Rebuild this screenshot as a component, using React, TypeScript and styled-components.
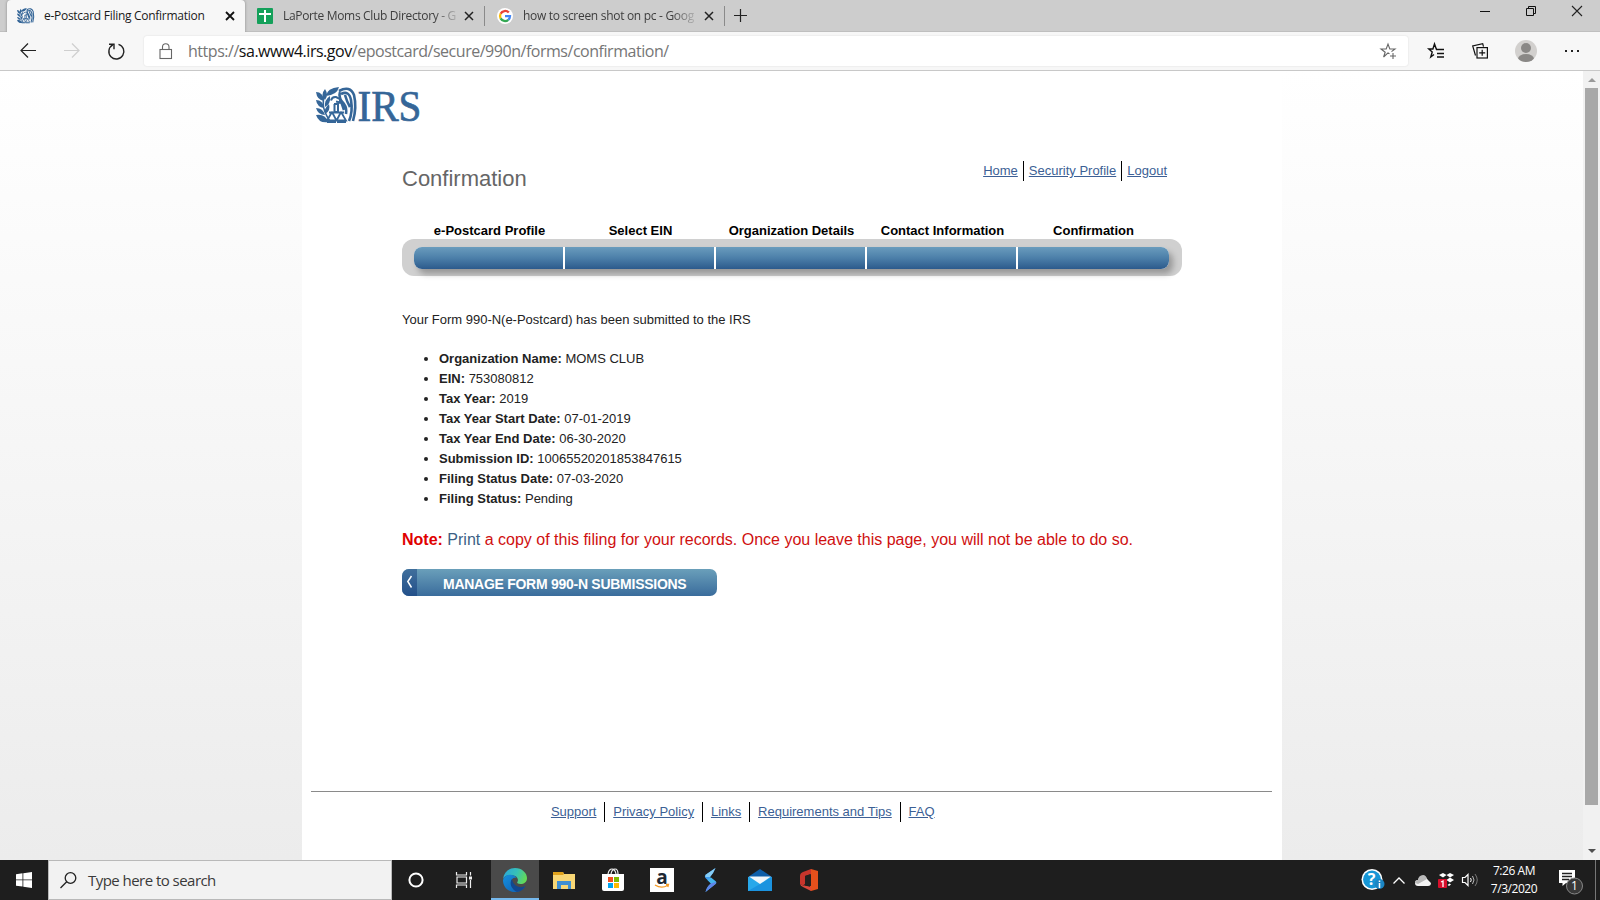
import React from "react";
import styled, { createGlobalStyle } from "styled-components";

const Global = createGlobalStyle`
  * { box-sizing: border-box; }
  html, body { margin: 0; padding: 0; }
  body { width: 1600px; height: 900px; overflow: hidden; background: #fff; }
  svg { display: block; flex: none; overflow: visible; }
`;

const ui = `"Open Sans", "Noto Sans", sans-serif`;
const arial = `"Liberation Sans", Arial, sans-serif`;

const Screen = styled.div`
  width: 1600px;
  height: 900px;
  display: flex;
  flex-direction: column;
  font-family: ${ui};
`;

/* ---------- browser chrome ---------- */
const TabStrip = styled.div`
  height: 32px;
  flex: none;
  display: flex;
  background: #cdcdcd;
  border-bottom: 1px solid #bfbfbf;
  padding-left: 7px;
`;

const Tab = styled.div<{ $active?: boolean }>`
  width: ${(p) => (p.$active ? 238 : 239)}px;
  height: ${(p) => (p.$active ? 32 : 31)}px;
  padding: 0 11px 0 ${(p) => (p.$active ? 10 : 12)}px;
  display: flex;
  align-items: center;
  background: ${(p) => (p.$active ? "#f7f7f7" : "transparent")};
  box-shadow: ${(p) => (p.$active ? "0 0 3px rgba(0,0,0,.35)" : "none")};
  border-radius: 4px 4px 0 0;
  clip-path: ${(p) => (p.$active ? "inset(0 -4px 0 -4px)" : "none")};
`;

const TabTitle = styled.div<{ $active?: boolean; $space: number; $gap: number }>`
  margin-left: ${(p) => p.$gap}px;
  margin-right: auto;
  white-space: nowrap;
  font-size: 12px;
  line-height: 18px;
  letter-spacing: ${(p) => p.$space}px;
  color: ${(p) => (p.$active ? "#1a1a1a" : "#3d3d3d")};
  ${(p) => !p.$active && "mask-image: linear-gradient(90deg, #000 calc(100% - 22px), rgba(0,0,0,.2) 100%);"}
`;

const TabDivider = styled.div`
  width: 1px;
  height: 20px;
  margin-top: 6px;
  background: #8a8a8a;
`;

const NewTab = styled.div`
  padding: 9px 0 0 9px;
`;

const WindowButtons = styled.div`
  margin-left: auto;
  display: flex;
  gap: 36px;
  padding: 6px 18px 0 0;
`;

const Toolbar = styled.div`
  height: 39px;
  flex: none;
  display: flex;
  align-items: center;
  background: #f7f7f7;
  border-bottom: 1px solid #c8c8c8;
`;

const NavButtons = styled.div`
  width: 144px;
  display: flex;
  align-items: center;
  gap: 28px;
  padding-left: 20px;
`;

const AddressBar = styled.div`
  width: 1264px;
  height: 30px;
  display: flex;
  align-items: center;
  background: #fff;
  border-radius: 3px;
  box-shadow: 0 0 2px rgba(0, 0, 0, 0.12);
  padding: 0 12px 0 15px;
`;

const Url = styled.div`
  margin: 0 auto 0 15px;
  font-size: 16px;
  line-height: 24px;
  letter-spacing: -0.47px;
  white-space: nowrap;
  color: #767676;
`;

const Host = styled.span`
  color: #111;
`;

const ToolbarActions = styled.div`
  flex: 1;
  display: flex;
  align-items: center;
  justify-content: space-between;
  padding: 0 21px 0 20px;
`;

/* ---------- page ---------- */
const Viewport = styled.div`
  height: 789px;
  flex: none;
  display: flex;
  background: linear-gradient(#fff, #ececec);
`;

const Scrollbar = styled.div`
  width: 17px;
  margin-left: auto;
  display: flex;
  flex-direction: column;
  align-items: center;
  background: #f1f1f1;
  padding: 7px 0;
`;

const Thumb = styled.div`
  width: 13px;
  height: 717px;
  margin: 6px 0 auto;
  background: #a8a8a8;
`;

const Page = styled.main`
  width: 980px;
  margin-left: 302px;
  background: #fff;
  padding: 16px 10px 0 9px;
  display: flex;
  flex-direction: column;
  font-family: ${arial};
  font-size: 13px;
  line-height: 20px;
  color: #222;
`;

const Content = styled.section`
  margin-left: 91px;
  width: 780px;
  height: 667px;
  display: flex;
  flex-direction: column;
  align-items: flex-start;
`;

const Header = styled.header`
  width: 765px;
  display: flex;
  justify-content: space-between;
  margin-top: 37px;
`;

const Title = styled.h1`
  margin: 3px 0 0;
  font-size: 22px;
  line-height: 30px;
  font-weight: 400;
  color: #666;
`;

const Links = styled.nav<{ $gap: number }>`
  display: flex;
  align-items: center;
  height: 20px;
  a {
    color: #3c5f95;
    text-decoration: underline;
    padding: 0 ${(p) => p.$gap}px;
  }
  a + a {
    border-left: 1px solid #000;
  }
  a:last-child {
    padding-right: 0;
  }
`;

const StepLabels = styled.div`
  display: flex;
  margin: 28px 0 0 13px;
`;

const StepLabel = styled.div`
  width: 151px;
  padding-right: 2px;
  text-align: center;
  font-weight: 700;
  line-height: 17px;
  color: #000;
  white-space: nowrap;
`;

const Track = styled.div`
  width: 780px;
  height: 37px;
  padding: 8px 13px 7px 12px;
  background: #d0d0d0;
  border-radius: 12px;
  display: flex;
`;

const Progress = styled.div`
  flex: 1;
  display: flex;
  gap: 2px;
  border-radius: 8px;
  background: #fff;
  overflow: hidden;
`;

const ProgressShadow = styled.div`
  display: flex;
  flex: 1;
  border-radius: 8px;
  box-shadow: 4px 5px 6px rgba(0, 0, 0, 0.28);
`;

const Segment = styled.div`
  width: 149px;
  background: linear-gradient(#6a9cbd, #4c7fa9 50%, #2c5a8c);
  &:last-child { flex: 1; }
`;

const Intro = styled.p`
  margin: 34px 0 0;
  letter-spacing: -0.01px;
`;

const Facts = styled.ul`
  margin: 19px 0 0;
  padding: 0 0 0 37px;
`;

const Note = styled.p`
  margin: 20px 0 0;
  font-size: 16px;
  line-height: 22px;
  color: #cf1010;
  white-space: nowrap;
  b { color: #e00000; }
  a { color: #3c5f85; }
`;

const ManageButton = styled.button`
  width: 315px;
  height: 27px;
  margin-top: 18px;
  padding: 0;
  border: 0;
  border-radius: 7px;
  overflow: hidden;
  display: flex;
  background: linear-gradient(#6a9fba, #3a6c9c);
  color: #fff;
  font: 700 14px/30px ${arial};
`;

const ButtonArrow = styled.span`
  width: 15px;
  height: 27px;
  display: flex;
  align-items: center;
  justify-content: center;
  padding-bottom: 2px;
  background: linear-gradient(#406f9c, #23508a);
`;

const ButtonText = styled.span`
  margin-left: 26px;
  letter-spacing: -0.27px;
  white-space: nowrap;
`;

const Footer = styled.footer`
  border-top: 1px solid #8a8a8a;
  padding: 10px 0 0 232px;
`;

/* ---------- taskbar ---------- */
const Taskbar = styled.div`
  height: 40px;
  flex: none;
  display: flex;
  background: #1e1e1e;
  color: #fff;
`;

const TaskButton = styled.div<{ $w?: number; $active?: boolean }>`
  width: ${(p) => p.$w ?? 49}px;
  height: 40px;
  display: flex;
  align-items: center;
  justify-content: center;
  background: ${(p) => (p.$active ? "#4a4a4a" : "transparent")};
  border-bottom: ${(p) => (p.$active ? "2px solid #76b9ed" : "0")};
  padding-top: ${(p) => (p.$active ? 2 : 0)}px;
  margin-left: ${(p) => (p.$active ? 3 : 0)}px;
`;

const Search = styled.div`
  width: 344px;
  height: 40px;
  display: flex;
  align-items: center;
  background: #f2f2f2;
  border: 1px solid #b9b9b9;
  padding-left: 11px;
  color: #3a3a3a;
  font-size: 15px;
  letter-spacing: -0.54px;
`;

const SearchHint = styled.span`
  margin: 0 0 1px 11px;
`;

const Tray = styled.div`
  margin-left: auto;
  display: flex;
  align-items: center;
`;

const Clock = styled.div`
  width: 62px;
  margin-left: 4px;
  text-align: center;
  font-size: 12px;
  line-height: 18px;
  letter-spacing: -0.45px;
  white-space: nowrap;
`;

const ShowDesktop = styled.div`
  width: 5px;
  height: 40px;
  border-left: 1px solid #777;
`;

/* ---------- drawings ---------- */
const Emblem = ({ w = 40, color = "#356698" }: { w?: number; color?: string }) => (
  <svg width={w} height={(w * 37) / 40} viewBox="0 0 40 37" fill="none" stroke={color}>
    <g fill={color} stroke="none">
      <path d="M0 5Q7 5 8 14Q1 13 0 5ZM9 13Q4 8 9 2Q13 8 9 13ZM10 9Q11 1 23 0Q21 8 10 9Z" />
      <path d="M0 13Q7 13 8 21Q1 20 0 13ZM9 20Q8 13 14 9Q15 17 9 20Z" />
      <path d="M0 21Q7 21 9 28Q2 28 0 21ZM9 27Q8 21 13 17Q15 24 9 27Z" />
      <path d="M0 28Q8 26 13 35Q3 37 0 28Z" />
    </g>
    <path d="M8 9Q6 18 9 25T15 35" strokeWidth="1.6" />
    <path d="M15 13.500q1-4 5-3.500l4 2v3.500l-4-1M18 17h4v8h-3.500V17M13 25.500h15" strokeWidth="2" />
    <path d="M16 25l-5 8.500h9.500L16 25M25 25l-4.500 8.500H30L25 25M11 35h9M21 35h9" strokeWidth="1.800" />
    <path d="M23 4Q34-2 38 8Q41 20 37 34M25 7Q33 3 35 13Q37 25 33 34M24 5Q22 11 28 17Q31 21 30 27M29 8Q31 15 34 20M24 11l4 12" strokeWidth="2.600" />
  </svg>
);

const IrsLogo = () => (
  <svg width="106" height="37" viewBox="0 0 106 37" style={{ marginLeft: 5 }}>
    <Emblem />
    <text x="41.500" y="33.500" fontFamily="Liberation Serif, serif" fontSize="45" textLength="64" lengthAdjust="spacingAndGlyphs" fill="#356698" stroke="#356698" strokeWidth=".7">
      IRS
    </text>
  </svg>
);

const CloseX = ({ s = 8, w = 1.5, c = "#222" }: { s?: number; w?: number; c?: string }) => (
  <svg width={s} height={s} viewBox={`0 0 ${s} ${s}`} stroke={c} strokeWidth={w}>
    <path d={`M0 0L${s} ${s}M${s} 0L0 ${s}`} />
  </svg>
);

const SheetsIcon = () => (
  <svg width="16" height="16" viewBox="0 0 16 16">
    <rect width="16" height="16" rx="1" fill="#14a05a" />
    <path d="M2 6h12M8 2v12" stroke="#fff" strokeWidth="2" />
  </svg>
);

const GoogleIcon = () => (
  <svg width="16" height="16" viewBox="0 0 16 16" fill="none" strokeWidth="2.3">
    <circle cx="8" cy="8" r="8" fill="#fff" />
    <path d="M11.8 4.6A5 5 0 0 0 3.6 5.8" stroke="#ea4335" />
    <path d="M3.6 5.8a5 5 0 0 0 0 4.6" stroke="#fbbc05" />
    <path d="M3.6 10.4A5 5 0 0 0 11.3 11.8" stroke="#34a853" />
    <path d="M11.3 11.8A5 5 0 0 0 13 8.2H8" stroke="#4285f4" />
  </svg>
);

const NavIcons = () => (
  <NavButtons>
    <svg width="16" height="16" viewBox="0 0 16 16" fill="none" stroke="#222" strokeWidth="1.2">
      <path d="M16 7.500H1M8 .5L1 7.500l7 7" />
    </svg>
    <svg width="16" height="16" viewBox="0 0 16 16" fill="none" stroke="#cfcfcf" strokeWidth="1.2">
      <path d="M0 7.500h15M8 .5l7 7-7 7" />
    </svg>
    <svg width="17" height="17" viewBox="0 0 17 17" fill="none" stroke="#222" strokeWidth="1.4">
      <path d="M10.500 1.300A7.500 7.500 0 1 1 4.800 1.900M1 1.200h5v5" />
    </svg>
  </NavButtons>
);

const BrowserActions = () => (
  <ToolbarActions>
    <svg width="16" height="16" viewBox="0 0 16 16" fill="none" stroke="#111" strokeWidth="1.4">
      <path d="M9 6H8.300L6.500 1 4.900 6H.8l3.400 3-1.400 5L6 11.500M8 6.500h8M9 10.500h7M9 14h7" />
    </svg>
    <svg width="16" height="16" viewBox="0 0 16 16" fill="none" stroke="#111" strokeWidth="1.2">
      <path d="M3.500 12.500L.7 3l10-2.400.8 3" />
      <rect x="5" y="4.600" width="10.400" height="10.400" />
      <path d="M10.200 6.800v6M7.200 9.800h6" />
    </svg>
    <svg width="22" height="22" viewBox="0 0 22 22">
      <clipPath id="avatar"><circle cx="11" cy="11" r="11" /></clipPath>
      <g clipPath="url(#avatar)">
        <rect width="22" height="22" fill="#d2d0ce" />
        <circle cx="11" cy="8" r="5" fill="#8a8886" />
        <ellipse cx="11" cy="19" rx="8" ry="5" fill="#8a8886" />
      </g>
    </svg>
    <svg width="14" height="2" viewBox="0 0 14 2" fill="#222">
      <path d="M0 0h2v2H0zM6 0h2v2H6zM12 0h2v2h-2z" />
    </svg>
  </ToolbarActions>
);

const EdgeIcon = () => (
  <svg width="24" height="24" viewBox="0 0 24 24">
    <defs>
      <linearGradient id="e1" x1="0" x2="1" y1=".2" y2=".5">
        <stop offset="0" stopColor="#2aa7dc" /><stop offset=".55" stopColor="#37c1b7" /><stop offset="1" stopColor="#63d957" />
      </linearGradient>
      <linearGradient id="e2" x1="0" x2="1" y1="0" y2="1">
        <stop offset="0" stopColor="#1590df" /><stop offset="1" stopColor="#0f5cae" />
      </linearGradient>
    </defs>
    <path d="M0 11C1 4 6 0 12 0c7 0 12 5 12 10 0 4-3 6-6.500 6-3 0-4-1-3-2.300 1-1.500.5-4.700-3-6C7 6 2 7 0 11z" fill="url(#e1)" />
    <path d="M0 12C1 8 5 6 9 7c2 .4 4 1.500 4.500 3C9 9 7 13 9 17c2 4 8 5 13 1-2 4-6 6-10 6C5 24 0 19 0 12z" fill="url(#e2)" />
    <path d="M9 11c-3 4-1 10 5 13 4-.6 7-3 8.500-6C17 21 10 18 9 11z" fill="#12478f" />
  </svg>
);

const FolderIcon = () => (
  <svg width="22" height="19" viewBox="0 0 22 19">
    <path d="M0 1h10l1 2h11v15H0z" fill="#f8d775" />
    <path d="M0 1h10l1 2-1 1H0z" fill="#e0a21c" />
    <path d="M4 18v-8h14v8h-3v-4H8v4z" fill="#3f8fd2" />
  </svg>
);

const StoreIcon = () => (
  <svg width="24" height="24" viewBox="0 0 24 24">
    <path d="M7 6Q8 1 11 1T15 6M10 6Q11 1 14 1T17 6" fill="none" stroke="#eee" strokeWidth="1.200" />
    <path d="M1 6h22v15q0 2-2 2H3q-2 0-2-2z" fill="#fff" />
    <path d="M7 9h5v5H7z" fill="#f25022" /><path d="M13 9h5v5h-5z" fill="#7fba00" />
    <path d="M7 15h5v5H7z" fill="#00a4ef" /><path d="M13 15h5v5h-5z" fill="#ffb900" />
  </svg>
);

const AmazonIcon = () => (
  <svg width="24" height="24" viewBox="0 0 24 24">
    <path d="M0 0h24v24H0z" fill="#fff" />
    <text x="12" y="15.500" textAnchor="middle" fontFamily="Open Sans, sans-serif" fontWeight="700" fontSize="19" fill="#1c2733">a</text>
    <path d="M5 17q6.500 4 12.500.5M16 16.500h2.500l-.7 2.500" fill="none" stroke="#f59a23" strokeWidth="1.300" />
  </svg>
);

const BoltIcon = () => (
  <svg width="14" height="24" viewBox="0 0 14 24">
    <path d="M11.500 0L2 6.500Q0 8 1.500 10L7 15.500l3-2.500-4-4q3-3 5.500-9z" fill="#3f9cf0" />
    <path d="M11.500 0L2 6.500q-1 1-.5 2.500l4.500 0q3-3 5.500-9z" fill="#86cdf5" />
    <path d="M1.500 24Q3 18 7 15.500L3.500 12 7 9.500l5 4q1 1.500-.5 2.500z" fill="#43b4ec" />
    <path d="M1.500 24Q3 18 7 15.500l5-1.500q.5 1-.5 2z" fill="#5f83e8" />
  </svg>
);

const MailIcon = () => (
  <svg width="24" height="22" viewBox="0 0 24 22">
    <path d="M0 8L12 0l12 8v2H0z" fill="#0e5ea8" />
    <path d="M0 8h24v14H0z" fill="#28a8ea" />
    <path d="M0 22L24 8v14z" fill="#1b93df" />
    <path d="M1 7.500h22L12 15z" fill="#f1f6fa" />
  </svg>
);

const OfficeIcon = () => (
  <svg width="18" height="22" viewBox="0 0 18 22">
    <path d="M11 0l7 2v18l-7 2-1-2.500V3z" fill="#e5501c" />
    <path d="M11 0L3 3Q0 4 0 7v8l3 1.500 2-1.500V7l6-2z" fill="#c9352c" />
    <path d="M3 16.500L0 15q.5 2 3 3l8 4v-4l-6-1.500z" fill="#d9483c" />
    <path d="M5 7l6-2v12l-6-.500z" fill="#25201f" />
  </svg>
);

const tasks = [EdgeIcon, FolderIcon, StoreIcon, AmazonIcon, BoltIcon, MailIcon, OfficeIcon];

const steps = ["e-Postcard Profile", "Select EIN", "Organization Details", "Contact Information", "Confirmation"];

const facts: [string, string][] = [
  ["Organization Name:", "MOMS CLUB"],
  ["EIN:", "753080812"],
  ["Tax Year:", "2019"],
  ["Tax Year Start Date:", "07-01-2019"],
  ["Tax Year End Date:", "06-30-2020"],
  ["Submission ID:", "10065520201853847615"],
  ["Filing Status Date:", "07-03-2020"],
  ["Filing Status:", "Pending"],
];

export default function App() {
  return (
    <Screen>
      <Global />
      <TabStrip>
        <Tab $active>
          <Emblem w={17} />
          <TabTitle $active $space={-0.28} $gap={10}>e-Postcard Filing Confirmation</TabTitle>
          <CloseX w={1.8} c="#111" />
        </Tab>
        <Tab>
          <SheetsIcon />
          <TabTitle $space={-0.33} $gap={10}>LaPorte Moms Club Directory - G</TabTitle>
          <CloseX />
        </Tab>
        <TabDivider />
        <Tab>
          <GoogleIcon />
          <TabTitle $space={-0.3} $gap={10}>how to screen shot on pc - Goog</TabTitle>
          <CloseX />
        </Tab>
        <TabDivider />
        <NewTab>
          <svg width="13" height="13" viewBox="0 0 13 13" stroke="#222" strokeWidth="1.200">
            <path d="M0 6.500h13M6.500 0v13" />
          </svg>
        </NewTab>
        <WindowButtons>
          <svg width="10" height="10" viewBox="0 0 10 10" stroke="#111"><path d="M0 5.500h10" /></svg>
          <svg width="10" height="10" viewBox="0 0 10 10" fill="none" stroke="#111">
            <path d="M.5 2.500h7v7h-7zM2.500 2.500v-2h7v7h-2" />
          </svg>
          <CloseX s={10} w={1.1} />
        </WindowButtons>
      </TabStrip>

      <Toolbar>
        <NavIcons />
        <AddressBar>
          <svg width="14" height="16" viewBox="0 0 14 16" fill="none" stroke="#666" strokeWidth="1.100">
            <rect x="1" y="6.500" width="11.500" height="9" />
            <path d="M3.500 6.500V4a3.200 3.200 0 0 1 6.500 0v2.500" />
          </svg>
          <Url>https://<Host>sa.www4.irs.gov</Host>/epostcard/secure/990n/forms/confirmation/</Url>
          <svg width="16" height="16" viewBox="0 0 16 16" fill="none" stroke="#666" strokeWidth="1.100">
            <path d="M9.500 10.800L8 9.900 3.600 14l1.600-4.800L1 6h5.200L8 1l1.800 5H15l-3.500 2.600M13 10v6M10 13h6" />
          </svg>
        </AddressBar>
        <BrowserActions />
      </Toolbar>

      <Viewport>
        <Page>
          <IrsLogo />
          <Content>
            <Header>
              <Title>Confirmation</Title>
              <Links $gap={5}>
                {["Home", "Security Profile", "Logout"].map((t) => <a key={t}>{t}</a>)}
              </Links>
            </Header>
            <StepLabels>
              {steps.map((s) => <StepLabel key={s}>{s}</StepLabel>)}
            </StepLabels>
            <Track>
              <ProgressShadow>
                <Progress>{steps.map((s) => <Segment key={s} />)}</Progress>
              </ProgressShadow>
            </Track>
            <Intro>Your Form 990-N(e-Postcard) has been submitted to the IRS</Intro>
            <Facts>
              {facts.map(([k, v]) => <li key={k}><b>{k}</b> {v}</li>)}
            </Facts>
            <Note>
              <b>Note:</b> <a>Print</a> a copy of this filing for your records. Once you leave this page, you will not be able to do so.
            </Note>
            <ManageButton>
              <ButtonArrow>
                <svg width="5" height="12" viewBox="0 0 5 12" fill="none" stroke="#fff" strokeWidth="1.500">
                  <path d="M4.500 0L.8 5.500l3.700 6" />
                </svg>
              </ButtonArrow>
              <ButtonText>MANAGE FORM 990-N SUBMISSIONS</ButtonText>
            </ManageButton>
          </Content>
          <Footer>
            <Links $gap={7.9}>
              {["Support", "Privacy Policy", "Links", "Requirements and Tips", "FAQ"].map((t) => <a key={t}>{t}</a>)}
            </Links>
          </Footer>
        </Page>
        <Scrollbar>
          <svg width="8" height="4" viewBox="0 0 8 4"><path d="M0 4l4-4 4 4z" fill="#999" /></svg>
          <Thumb />
          <svg width="8" height="4" viewBox="0 0 8 4"><path d="M0 0h8L4 4z" fill="#505050" /></svg>
        </Scrollbar>
      </Viewport>

      <Taskbar>
        <TaskButton $w={48}>
          <svg width="16" height="16" viewBox="0 0 16 16" fill="#fff">
            <path d="M0 2.200l6.500-.9v6.200H0zM7.300 1.200L16 0v7.500H7.300zM0 8.300h6.500v6.300L0 13.700zM7.300 8.300H16V16l-8.700-1.200z" />
          </svg>
        </TaskButton>
        <Search>
          <svg width="17" height="17" viewBox="0 0 17 17" fill="none" stroke="#222" strokeWidth="1.300">
            <circle cx="10.500" cy="6" r="5.300" /><path d="M6.700 9.800L.5 16" />
          </svg>
          <SearchHint>Type here to search</SearchHint>
        </Search>
        <TaskButton $w={48}>
          <svg width="16" height="16" viewBox="0 0 16 16" fill="none" stroke="#fff" strokeWidth="2"><circle cx="8" cy="8" r="6.600" /></svg>
        </TaskButton>
        <TaskButton $w={48}>
          <svg width="16" height="16" viewBox="0 0 16 16" fill="none" stroke="#eee" strokeWidth="1.200">
            <path d="M.5 0v3h10V0M.5 16v-3h10v3M1 5h9.500v6H1zM14.500 0v3.500M14.500 8v8" /><path d="M13 4.500h3v3h-3z" fill="#eee" stroke="none" />
          </svg>
        </TaskButton>
        {tasks.map((Icon, i) => (
          <TaskButton key={i} $active={i === 0} $w={i === 0 ? 48 : 49}><Icon /></TaskButton>
        ))}
        <Tray>
          <svg width="24" height="22" viewBox="0 0 24 22">
            <circle cx="11" cy="10.500" r="10.500" fill="#fff" /><circle cx="11" cy="10.500" r="9" fill="#1696d6" />
            <text x="10.500" y="16" textAnchor="middle" fontFamily="Open Sans, sans-serif" fontWeight="700" fontSize="16" fill="#fff">?</text>
            <circle cx="18.500" cy="15" r="5" fill="#1b86c4" /><path d="M18.500 14v5M18.500 11.500v1.500" stroke="#fff" strokeWidth="1.500" />
          </svg>
          <svg width="12" height="7" viewBox="0 0 12 7" fill="none" stroke="#fff" strokeWidth="1.300" style={{ marginLeft: 8 }}><path d="M.5 6.500L6 1l5.500 5.500" /></svg>
          <svg width="16" height="11" viewBox="0 0 16 11" style={{ marginLeft: 10 }}>
            <path d="M3 11a3 3 0 0 1 0-6 5 5 0 0 1 8-2.500L13 5l3 3q0 3-3 3z" fill="#f4f4f4" />
            <path d="M0 8a3 3 0 0 1 3-3A5 5 0 0 1 8-.1Q11 0 12 4L3 9z" fill="#b9b9b9" />
          </svg>
          <svg width="17" height="15" viewBox="0 0 17 15" style={{ marginLeft: 7 }}>
            <path d="M1 2l4-2 3.500 2L5 4.500zM8.500 2L12 0l4 2-4 2.500zM8.500 7L12 4.500 16 7l-4 2.500zM9.500 12l2-1.500 1.500 1-2 1.500z" fill="#fff" />
            <rect x="0" y="6" width="9" height="9" rx="1" fill="#d8102c" />
            <path d="M3 9l2-1v6" fill="none" stroke="#fff" strokeWidth="1.300" />
          </svg>
          <svg width="17" height="14" viewBox="0 0 17 14" fill="none" stroke="#fff" style={{ marginLeft: 7 }}>
            <path d="M.5 4.500h2.500L6 1.500v11L3 9.500H.5z" strokeWidth="1.200" />
            <path d="M8.500 5q1.500 2 0 4" /><path d="M10.500 3q3 4 0 8" stroke="#bbb" /><path d="M13 1q4.500 6 0 12" stroke="#777" />
          </svg>
          <Clock>7:26 AM<br />7/3/2020</Clock>
          <svg width="26" height="26" viewBox="0 0 26 26" style={{ margin: "6px 11px 0 13px" }}>
            <path d="M1 0h16v13H8l-3.500 3v-3H1z" fill="#fff" /><path d="M4 3.500h10M4 6.500h10M4 9.500h7" stroke="#222" strokeWidth="1.300" />
            <circle cx="16.500" cy="16" r="8" fill="#383838" stroke="#888" />
            <text x="16.500" y="20" textAnchor="middle" fontFamily="Open Sans, sans-serif" fontSize="12" fill="#fff">1</text>
          </svg>
          <ShowDesktop />
        </Tray>
      </Taskbar>
    </Screen>
  );
}
